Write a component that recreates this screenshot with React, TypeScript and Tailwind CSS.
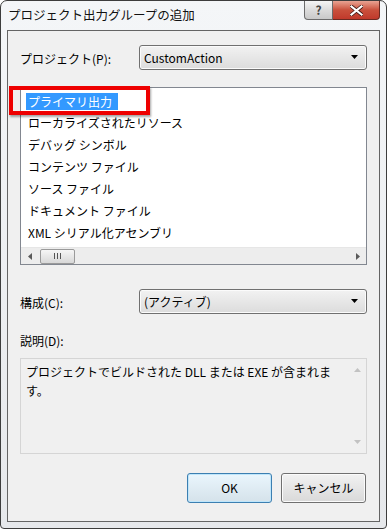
import React from "react";

const font = { fontFamily: '"Noto Sans CJK JP", "Noto Sans", sans-serif' };

function Arrow() {
  return (
    <svg width="8" height="5" viewBox="0 0 8 5">
      <path d="M0 0 L7 0 L3.5 4 Z" fill="#000" />
    </svg>
  );
}

function Combo({ value }: { value: string }) {
  return (
    <div className="flex h-[25px] w-[228px] items-center justify-between rounded-[3px] border border-[#707070] bg-gradient-to-b from-[#f2f2f2] to-[#dcdcdc] pl-[4px] pr-[7px] text-[12px] text-black shadow-[inset_0_0_0_1px_#fbfbfb]">
      <span className="leading-none">{value}</span>
      <Arrow />
    </div>
  );
}

export default function App() {
  const items = [
    "ローカライズされたリソース",
    "デバッグ シンボル",
    "コンテンツ ファイル",
    "ソース ファイル",
    "ドキュメント ファイル",
    "XML シリアル化アセンブリ",
  ];
  return (
    <div style={font} className="flex h-[529px] w-[387px] flex-col overflow-hidden rounded-t-[7px] rounded-b-[4px] border border-[#3d3d3d] bg-gradient-to-b from-[#f4f6f8] to-[#e6e8eb] text-[12px] text-black">
      {/* title bar */}
      <div className="flex h-[29px] shrink-0 items-start justify-between">
        <div className="pl-[7px] pt-[5px] text-[12.5px] leading-[18px] text-[#111]">
          プロジェクト出力グループの追加
        </div>
        <div className="mr-[6px] flex">
          <div className="flex h-[19px] w-[29px] items-center justify-center rounded-bl-[4px] border border-t-0 border-[#6b6b6b] bg-gradient-to-b from-[#f5f5f5] via-[#dcdcdc] to-[#c9c9c9] text-[12px] font-bold leading-none text-[#444]">
            ?
          </div>
          <div className="flex h-[19px] w-[47px] items-center justify-center rounded-br-[4px] border border-l-0 border-t-0 border-[#6b2a22] bg-gradient-to-b from-[#e8a393] via-[#c9503c] to-[#c0392b]">
            <svg width="13" height="11" viewBox="0 0 13 11">
              <path d="M1.5 1.5 L11.5 9.5 M11.5 1.5 L1.5 9.5" stroke="#3a1510" strokeWidth="3.6" strokeLinecap="square" />
              <path d="M1.5 1.5 L11.5 9.5 M11.5 1.5 L1.5 9.5" stroke="#fff" strokeWidth="2.2" strokeLinecap="square" />
            </svg>
          </div>
        </div>
      </div>

      {/* client */}
      <div className="mx-[6px] flex h-[492px] shrink-0 flex-col border border-[#646464] bg-[#f0f0f0] px-[12px]">
        <div className="mt-[14px] flex h-[25px] items-center justify-between">
          <span className="pt-[2px]">プロジェクト(P):</span>
          <Combo value="CustomAction" />
        </div>

        {/* list */}
        <div className="relative mt-[17px] flex h-[178px] flex-col border border-[#828790] bg-white">
          <div className="flex flex-1 flex-col pt-[2px]">
            <div className="flex h-[22px] items-center pl-[5px]">
              <span className="bg-[#3399ff] pl-[2px] pr-[6px] leading-[17px] text-white">プライマリ出力</span>
            </div>
            {items.map((t) => (
              <div key={t} className="flex h-[22px] items-center pl-[7px] leading-none">
                {t}
              </div>
            ))}
          </div>
          {/* h scrollbar */}
          <div className="flex h-[17px] items-center border-t border-[#e6e6e6] bg-[#ededed]">
            <div className="flex w-[17px] items-center justify-center">
              <svg width="4" height="7" viewBox="0 0 4 7"><path d="M4 0 L0 3.5 L4 7 Z" fill="#5a5a5a" /></svg>
            </div>
            <div className="ml-[2px] flex h-[15px] w-[35px] items-center justify-center gap-[2px] rounded-[2px] border border-[#9a9a9a] bg-gradient-to-b from-[#f6f6f6] to-[#d8d8d8]">
              <span className="h-[6px] w-[1px] bg-[#555]" />
              <span className="h-[6px] w-[1px] bg-[#555]" />
              <span className="h-[6px] w-[1px] bg-[#555]" />
            </div>
            <div className="flex-1" />
            <div className="flex w-[17px] items-center justify-center">
              <svg width="4" height="7" viewBox="0 0 4 7"><path d="M0 0 L4 3.5 L0 7 Z" fill="#5a5a5a" /></svg>
            </div>
          </div>
          {/* red highlight */}
          <div className="pointer-events-none absolute left-[-12px] top-[-2px] h-[29px] w-[141px] border-[4px] border-[#ee0000] shadow-[1px_2px_2px_rgba(0,0,0,0.35)]" />
        </div>

        <div className="mt-[24px] flex h-[25px] items-center justify-between">
          <span className="pt-[2px]">構成(C):</span>
          <Combo value="(アクティブ)" />
        </div>

        <div className="mt-[19px] h-[16px] leading-[16px]">説明(D):</div>

        {/* description */}
        <div className="mt-[9px] flex h-[96px] border border-[#d5d5d5] bg-[#f0f0f0]">
          <div className="flex-1 pl-[5px] pt-[3px] leading-[19px]">
            プロジェクトでビルドされた DLL または EXE が含まれま
            <br />
            す。
          </div>
          <div className="flex w-[17px] flex-col items-center justify-between py-[9px]">
            <svg width="7" height="4" viewBox="0 0 7 4"><path d="M0 4 L3.5 0 L7 4 Z" fill="#c2c2c2" /></svg>
            <svg width="7" height="4" viewBox="0 0 7 4"><path d="M0 0 L3.5 4 L7 0 Z" fill="#c2c2c2" /></svg>
          </div>
        </div>

        {/* buttons */}
        <div className="mt-[19px] flex justify-end gap-[9px] pr-[1px]">
          <div className="flex h-[30px] w-[85px] items-center justify-center rounded-[3px] border border-[#3c7fb1] bg-gradient-to-b from-[#eaf6fd] to-[#d5e2ea] shadow-[inset_0_0_0_1px_#bfe6fb]">
            OK
          </div>
          <div className="flex h-[30px] w-[85px] items-center justify-center rounded-[3px] border border-[#707070] bg-gradient-to-b from-[#f2f2f2] to-[#d9d9d9] shadow-[inset_0_0_0_1px_#fbfbfb]">
            キャンセル
          </div>
        </div>
      </div>
    </div>
  );
}
